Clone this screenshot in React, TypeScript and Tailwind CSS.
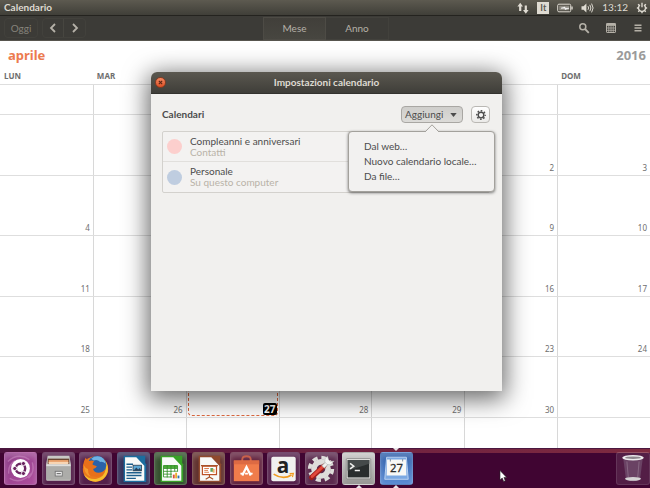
import React, { useState } from "react";

const DAYS = ["LUN", "MAR", "MER", "GIO", "VEN", "SAB", "DOM"];
const TODAY = 27;

// april 2016, 0 = cell outside the month
const WEEKS = [
  [0, 0, 0, 0, 0, 0, 0],
  [0, 0, 0, 0, 1, 2, 3],
  [4, 5, 6, 7, 8, 9, 10],
  [11, 12, 13, 14, 15, 16, 17],
  [18, 19, 20, 21, 22, 23, 24],
  [25, 26, 27, 28, 29, 30, 0],
  [0, 0, 0, 0, 0, 0, 0],
];

const CALENDARS = [
  { name: "Compleanni e anniversari", source: "Contatti", dot: "bg-[#fccfcd]" },
  { name: "Personale", source: "Su questo computer", dot: "bg-[#bfcde0]" },
];

const ADD_OPTIONS = ["Dal web…", "Nuovo calendario locale…", "Da file…"];

function Gear({ className }: { className?: string }) {
  return (
    <svg viewBox="0 0 16 16" className={className} fill="none" stroke="currentColor">
      <circle cx="8" cy="8" r="4.5" strokeWidth="2.2" />
      <circle
        cx="8"
        cy="8"
        r="6.7"
        strokeWidth="2.4"
        strokeDasharray="2.6 2.66"
        strokeDashoffset="1.3"
      />
    </svg>
  );
}

function TopPanel() {
  return (
    <header className="flex h-4 items-center justify-between border-b border-[#24231f] bg-linear-to-b from-[#5d5a50] to-[#403f39] pr-0.5 pl-1 text-[#dfdbd2]">
      <span className="text-[10px] font-bold">Calendario</span>
      <div className="flex items-center gap-2">
        <svg viewBox="0 0 12 12" className="h-3 w-3" fill="currentColor">
          <path d="M3.2 .8 6 4.4H4.3V9H2.100V4.400H.4zM8.800 11.700 6 8h1.700V3.400h2.200V8h1.700z" />
        </svg>
        <span className="h-3 w-3 bg-[#dfdbd2] text-center text-[9px] leading-3 font-bold text-[#5c5a53]">It</span>
        <svg viewBox="0 0 16 10" className="h-[10px] w-4" fill="none" stroke="currentColor">
          <rect x=".7" y="1.2" width="13" height="7.6" rx="1.2" />
          <path d="M15 3.5v3" strokeWidth="1.4" />
          <rect x="2.2" y="2.7" width="10" height="4.6" fill="#8e8b82" stroke="none" />
          <path d="M4 5.2 8 4v1.2h4L8 6.6V5.2z" fill="#fff" stroke="#fff" strokeWidth=".5" />
        </svg>
        <svg viewBox="0 0 13 12" className="h-3 w-[13px]" fill="none" stroke="currentColor">
          <path d="M.5 4.2h2L5.4 1.6v8.8L2.5 7.8h-2z" fill="currentColor" stroke="none" />
          <path d="M7 4.2q1.2 1.8 0 3.6M8.8 2.8q2.2 3.2 0 6.4M10.6 1.6q3 4.4 0 8.8" />
        </svg>
        <time className="text-[10px]">13:12</time>
        <svg viewBox="0 0 14 14" className="h-3 w-3" fill="none" stroke="currentColor">
          <path d="M4.6 3.6a4.1 4.1 0 1 0 4.8 0M7 .8v5.4" strokeWidth="1.6" />
          <path
            d="M1 7h1.6M11.4 7H13M2.6 11.4l1.2-1.2M11.4 11.4l-1.2-1.2M7 11.4V13M2.4 2.6l1.4 1.3M11.6 2.6l-1.4 1.3"
            strokeWidth="1.6"
          />
        </svg>
      </div>
    </header>
  );
}

function Toolbar() {
  return (
    <nav className="grid h-[25px] grid-cols-[1fr_auto_1fr] items-center border-b border-[#57554e] bg-[#3c3b37] pr-0.5 pl-1 text-[10px] text-[#b5b1a8]">
      <div className="flex items-center gap-1">
        <button className="h-5 w-[34px] rounded-sm border border-[#42413c] text-[#86837b]">Oggi</button>
        <div className="flex h-5 rounded-sm border border-[#42413c]">
          <button aria-label="Precedente" className="flex w-[21px] items-center justify-center border-r border-[#474640]">
            <svg viewBox="0 0 8 10" className="h-[10px] w-2" fill="none" stroke="currentColor" strokeWidth="1.8">
              <path d="M6 1 2 5l4 4" />
            </svg>
          </button>
          <button aria-label="Successivo" className="flex w-[21px] items-center justify-center">
            <svg viewBox="0 0 8 10" className="h-[10px] w-2" fill="none" stroke="currentColor" strokeWidth="1.8">
              <path d="m2 1 4 4-4 4" />
            </svg>
          </button>
        </div>
      </div>
      <div className="flex h-[23px]">
        <button className="w-[63px] border border-[#4d4b45] bg-linear-to-b from-[#413f3a] to-[#474640]">Mese</button>
        <button className="w-[63px] border border-l-0 border-[#42413c]">Anno</button>
      </div>
      <div className="flex items-center justify-end gap-[15px] pr-1">
        <button aria-label="Cerca">
          <svg viewBox="0 0 12 12" className="h-3 w-3" fill="none" stroke="currentColor">
            <circle cx="4.8" cy="4.8" r="3" strokeWidth="1.5" />
            <path d="m7 7 3.8 3.8" strokeWidth="1.8" />
          </svg>
        </button>
        <button aria-label="Calendari">
          <svg viewBox="0 0 12 12" className="h-3 w-3" fill="none" stroke="currentColor">
            <rect x="1.5" y="1.5" width="9" height="9" rx=".6" />
            <path d="M1.5 2.6h9" strokeWidth="2.6" />
            <path d="M1.5 6h9M1.5 8.3h9M3.8 4v6.5M6 4v6.5M8.2 4v6.5" strokeWidth=".8" />
          </svg>
        </button>
        <button aria-label="Menu">
          <svg viewBox="0 0 12 12" className="h-3 w-3" stroke="currentColor" strokeWidth="1.5">
            <path d="M2.5 3.2h7M2.5 6h7M2.5 8.8h7" />
          </svg>
        </button>
      </div>
    </nav>
  );
}

function Month() {
  return (
    <main className="flex flex-1 flex-col bg-white font-['Noto_Sans',sans-serif]">
      <div className="flex h-[30px] items-center justify-between pr-1 pl-2 text-[13px] font-bold">
        <h1 className="text-[#ec7b50]">aprile</h1>
        <span className="text-[#9b9b9b]">2016</span>
      </div>
      <table className="flex flex-1 flex-col">
        <thead className="block">
          <tr className="grid h-[13px] grid-cols-7">
            {DAYS.map((d) => (
              <th key={d} className="pl-1 text-left text-[8px] leading-[10px] font-bold text-[#6e6e6e]">
                {d}
              </th>
            ))}
          </tr>
        </thead>
        <tbody className="grid flex-1 grid-rows-[30px_repeat(5,1fr)_31px]">
          {WEEKS.map((week, w) => (
            <tr key={w} className="grid grid-cols-7 border-t border-[#dedede]">
              {week.map((day, i) => (
                <td
                  key={i}
                  className="flex border-l border-[#d8d8d8] p-px text-[8px] leading-3 text-[#6e6e6e] first:border-l-0"
                >
                  {day === TODAY ? (
                    <div className="flex flex-1 items-end justify-end rounded-sm border border-dashed border-[#e0693f]">
                      <span className="rounded-xs bg-black px-px text-[10px] font-bold text-white">{day}</span>
                    </div>
                  ) : (
                    <span className="flex flex-1 items-end justify-end pr-0.5">{day || ""}</span>
                  )}
                </td>
              ))}
            </tr>
          ))}
        </tbody>
      </table>
    </main>
  );
}

function SettingsDialog() {
  const [menuOpen, setMenuOpen] = useState(true);

  return (
    <section
      role="dialog"
      aria-labelledby="dialog-title"
      className="absolute top-[72px] left-[151px] min-h-[319px] w-[351px] rounded-t-md bg-[#f1f0ee] text-[10px] text-[#4c4c4c] shadow-[0_5px_24px_3px_rgba(0,0,0,0.6)]"
    >
      <div className="grid h-[22px] grid-cols-[1fr_auto_1fr] items-center rounded-t-md border-b border-[#33322e] bg-linear-to-b from-[#5b5850] to-[#3f3e39] px-1">
        <button
          aria-label="Chiudi"
          className="flex h-[11px] w-[11px] items-center justify-center rounded-full border border-[#8a3a20] bg-linear-to-b from-[#f58a62] to-[#dd4e22] text-[#5a2414]"
        >
          <svg viewBox="0 0 6 6" className="h-[5px] w-[5px]" stroke="currentColor" strokeWidth="1.3">
            <path d="m1 1 4 4M5 1 1 5" />
          </svg>
        </button>
        <h2 id="dialog-title" className="font-bold text-[#dfdbd2]">
          Impostazioni calendario
        </h2>
      </div>

      <div className="pt-3 pr-3 pl-[11px]">
        <div className="flex items-center gap-2">
          <h3 className="flex-1 font-bold">Calendari</h3>
          <div className="relative">
            <button
              aria-haspopup="menu"
              aria-expanded={menuOpen}
              onClick={() => setMenuOpen(!menuOpen)}
              className="flex h-[17px] w-[62px] items-center justify-between rounded-sm border border-[#a9a7a3] bg-linear-to-b from-[#cfcecb] to-[#dcdbd8] pr-[5px] pl-[3px]"
            >
              Aggiungi
              <svg viewBox="0 0 8 5" className="h-1 w-[7px]" fill="currentColor">
                <path d="M0 0h8L4 5z" />
              </svg>
            </button>
            {menuOpen && (
              <div
                role="menu"
                className="absolute top-[25px] -right-8 z-10 flex w-[147px] flex-col rounded-sm border border-[#a3a19c] bg-[#f2f1f0] py-[7px] pl-[15px] shadow-[0_1px_3px_rgba(0,0,0,0.5)]"
              >
                <svg viewBox="0 0 14 8" className="absolute -top-2 left-[76px] h-2 w-[14px]" fill="#f2f1f0">
                  <path d="M0 8 7 .8 14 8" stroke="#a3a19c" />
                </svg>
                {ADD_OPTIONS.map((o) => (
                  <button key={o} role="menuitem" className="text-left leading-[15px] whitespace-nowrap">
                    {o}
                  </button>
                ))}
              </div>
            )}
          </div>
          <button
            aria-label="Preferenze"
            className="flex h-[17px] w-[19px] items-center justify-center rounded-sm border border-[#bab8b4] bg-linear-to-b from-white to-[#ebeae8]"
          >
            <Gear className="h-[10px] w-[10px]" />
          </button>
        </div>

        <ul className="mt-2 rounded-xs border border-[#d3d1cd] bg-[#f3f2f1]">
          {CALENDARS.map((c) => (
            <li key={c.name} className="flex h-[30px] items-center gap-2 border-b border-[#e1dfdc] px-1 last:border-b-0">
              <span className={`h-[15px] w-[15px] rounded-full ${c.dot}`} />
              <div className="leading-[11px]">
                <p>{c.name}</p>
                <p className="text-[#b9b3a8]">{c.source}</p>
              </div>
            </li>
          ))}
        </ul>
      </div>
    </section>
  );
}

function DocPage({ color, children }: { color: string; children: React.ReactNode }) {
  return (
    <>
      <path d="M6 3h16l8 9v19H6z" fill={color} />
      <path d="M7.5 4.5h12l8.5 9V29.500H7.500z" fill="#f8faf8" />
      <path d="M20 3h9v11z" fill={color} />
      {children}
    </>
  );
}

const LAUNCHERS: { label: string; tile: string; running?: boolean; focused?: boolean; art: React.ReactNode }[] = [
  {
    label: "Dash",
    tile: "bg-linear-to-br from-[#8c3a86] to-[#b0509f]",
    art: (
      <>
        <path d="M3 9Q14 -1 26 7M5 27Q17 34 29 21M4 22Q3 12 11 8M29 10Q32 20 25 27" fill="none" stroke="#cf8fc6" strokeWidth="1.500" opacity=".5" />
        <circle cx="16.500" cy="16.500" r="10" fill="#fff" />
        <circle cx="16.500" cy="16.500" r="5" fill="none" stroke="#6a2560" strokeWidth="2.600" />
        <g fill="#6a2560" stroke="#fff" strokeWidth=".9">
          <circle cx="10.400" cy="16.500" r="2.200" />
          <circle cx="19.600" cy="11.200" r="2.200" />
          <circle cx="19.600" cy="21.800" r="2.200" />
        </g>
      </>
    ),
  },
  {
    label: "File",
    tile: "bg-[#54204b]",
    art: (
      <>
        <path d="M5 3h23l1.500 8v17.500q0 1-1 1h-24q-1 0-1-1V11z" fill="#c9c9c6" />
        <path d="M5 6h23v6H5z" fill="#6a4632" />
        <path d="M6 7.500h21v3H6z" fill="#e9a26d" />
        <path d="M6 9.500h21v2.500H6z" fill="#f7d5b4" />
        <path d="M3.500 13h26v15.500h-26z" fill="#acaca9" />
        <path d="M3.500 12h26v2h-26z" fill="#dededc" />
        <rect x="13" y="19.500" width="7.500" height="5" fill="#ececec" stroke="#777" />
        <path d="M14.500 22h4.500" stroke="#555" />
      </>
    ),
  },
  {
    label: "Firefox",
    tile: "bg-[#54204b]",
    art: (
      <>
        <circle cx="16.500" cy="17" r="13.500" fill="#ea7a1d" />
        <path d="M26 7q5 6 3.500 13-3 10-13 10.500Q7 30 3.800 22q6 7 14 5.500 8-2 9.500-10z" fill="#f6bf2f" />
        <circle cx="18" cy="13" r="10" fill="#2b62a8" />
        <path d="M12 6q5-4 11-1.500 4 3 4.500 7-3-2.500-6-2-3-3-7-1.500z" fill="#6fb3e3" />
        <path d="M3 14Q4 8 6 5q1.500 3 4 3.500 3-1 5 .5-2 1.500-1.500 3.500l4.500 1.500q-1 2-4 3 1 4 5.500 4 5 0 7.500-4-1 8-9 8.500Q6 25 3 14z" fill="#e8701a" />
        <path d="M4 13q0 9 7 12-3-4-2.500-8Q5.500 16 4 13z" fill="#f59a2b" />
      </>
    ),
  },
  {
    label: "Writer",
    tile: "bg-[#37335c]",
    art: (
      <DocPage color="#1b6d9e">
        <path d="M9 12h7M9 15h6M9 18h6M9 21h16M9 24h16M9 27h10" stroke="#1d5f8c" strokeWidth="1.500" />
        <rect x="16" y="13" width="9" height="6" fill="#5ba8d5" stroke="#234" strokeWidth=".8" />
        <path d="m16.500 19 3-3.500 2 2 1.500-1.500 2 3z" fill="#28415a" />
      </DocPage>
    ),
  },
  {
    label: "Calc",
    tile: "bg-[#35502f]",
    art: (
      <DocPage color="#38a227">
        <path d="M9 13h15v13H9z" fill="#fff" />
        <path d="M9 13h15v3H9z" fill="#4eae3a" />
        <path d="M9 13.500h15v12H9zM9 16.500h15M9 19.500h15M9 22.500h15M13 13v13M17 13v13M21 13v13" fill="none" stroke="#2f8d25" strokeWidth=".9" />
        <path d="M18 20h9v8h-9z" fill="#fff" />
        <path d="M19 27v-4h2v4z" fill="#d9503f" />
        <path d="M21.500 27v-6h2v6z" fill="#ecae2d" />
        <path d="M24 27v-3h2v3z" fill="#2f72b0" />
      </DocPage>
    ),
  },
  {
    label: "Impress",
    tile: "bg-[#61322f]",
    art: (
      <DocPage color="#8f4a2d">
        <rect x="10" y="14" width="15" height="9" fill="#fff" stroke="#bd5227" strokeWidth="1.300" />
        <path d="M8.500 13.500h18M17.500 23v2.500m0 0-4 2.500m4-2.500 4 2.500" stroke="#a9532b" strokeWidth="1.200" fill="none" />
        <path d="M12 16.500h5M12 18.500h4M12 20.500h5" stroke="#d97744" />
        <path d="M18.500 16h3v4h-3z" fill="#63a35b" />
        <path d="M21 17h2v4h-2z" fill="#edb46b" />
      </DocPage>
    ),
  },
  {
    label: "Ubuntu Software",
    tile: "bg-[#632540]",
    art: (
      <>
        <path d="M12 9V7q0-3.500 4.500-3.500T21 7v2" fill="none" stroke="#c9604a" strokeWidth="2" />
        <path d="M3 8h27v22H3z" fill="#f07c4b" />
        <path d="M3 8h27v4H3z" fill="#dd6a43" />
        <path d="m12 24 4.500-9 4.500 9" fill="none" stroke="#fff" strokeWidth="2.400" />
        <path d="M10 22h3.500M15 22h3M19.500 22H23" stroke="#fff" strokeWidth="2" />
      </>
    ),
  },
  {
    label: "Amazon",
    tile: "bg-[#54204b]",
    art: (
      <>
        <rect x="3.500" y="4" width="26" height="26" rx="2" fill="#f1f1ef" />
        <text x="16" y="21" textAnchor="middle" fontSize="22" fontWeight="bold" fontFamily="Open Sans" fill="#222">
          a
        </text>
        <path d="M6 22.500q10 6.500 19 1" fill="none" stroke="#f09b20" strokeWidth="1.800" />
        <path d="m23 22 4-.2-1 3.800" fill="none" stroke="#f09b20" strokeWidth="1.300" />
      </>
    ),
  },
  {
    label: "Impostazioni",
    tile: "bg-[#5b2a4e]",
    art: (
      <>
        <circle cx="16" cy="17" r="7.500" fill="none" stroke="#deddda" strokeWidth="6" />
        <circle cx="16" cy="17" r="12" fill="none" stroke="#deddda" strokeWidth="4" strokeDasharray="5.400 4.025" />
        <path d="m6 26 13-12" stroke="#a21d18" strokeWidth="5.500" strokeLinecap="round" />
        <path d="m6.500 25 12-11" stroke="#e2483c" strokeWidth="3" strokeLinecap="round" />
        <path d="m18 15 6-6" stroke="#b9b9b6" strokeWidth="4.500" />
        <path d="m18.500 14.500 5.500-5.500" stroke="#f0f0ee" strokeWidth="2.800" />
        <path d="M23 3.500q-4 2-3 6 2 4 6 3l4-4-4 .5-2-2z" fill="#f3f3f1" stroke="#a8a8a5" strokeWidth=".5" />
      </>
    ),
  },
  {
    label: "Terminale",
    tile: "bg-linear-to-b from-[#c7c6c5] to-[#989795]",
    running: true,
    art: (
      <>
        <rect x="3.500" y="6" width="26" height="21.500" rx="1" fill="#e4e4e1" stroke="#777" strokeWidth=".7" />
        <rect x="5" y="7.500" width="23" height="18.500" fill="#292d2d" />
        <path d="M5 7.500h23v4L5 19z" fill="#454a4a" />
        <path d="m7.500 11 4 3-4 3M12.500 18.500H18" fill="none" stroke="#f0f0ee" strokeWidth="1.600" />
      </>
    ),
  },
  {
    label: "Calendario",
    tile: "bg-linear-to-b from-[#2f5ea8] to-[#5b8cd4]",
    running: true,
    focused: true,
    art: (
      <>
        <path d="M6 4.500h21l2 23.500H4z" fill="#7ba8e2" stroke="#d4e4f8" strokeWidth=".8" />
        <path d="M6.500 7h20l.5 17h-21z" fill="#f8f8f6" />
        <path d="M10 6.500v2.500M23 6.500v2.500" stroke="#8a99ac" strokeWidth="1.200" />
        <text x="16.500" y="20.500" textAnchor="middle" fontSize="12" fontFamily="Noto Sans" fill="#2b2b2b" stroke="#2b2b2b" strokeWidth=".3">
          27
        </text>
      </>
    ),
  },
];

function Launcher() {
  return (
    <footer className="relative flex h-10 items-start justify-between border-t border-[#4a1840] bg-[#400532] pl-1">
      <div className="absolute inset-x-0 top-0 h-1 bg-linear-to-r from-[#4b123c] via-[#6e2140] to-[#7e2a40]" />
      <ul className="relative flex w-[409px] justify-between pt-[3px]">
        {LAUNCHERS.map((l) => (
          <li key={l.label} className="relative">
            <button
              aria-label={l.label}
              className={`block h-[33px] w-[33px] rounded-[3px] border border-white/20 shadow-[inset_0_4px_5px_rgba(255,255,255,0.22)] ${l.tile}`}
            >
              <svg viewBox="0 0 33 33" className="h-full w-full">
                {l.art}
              </svg>
            </button>
            {l.focused && (
              <svg viewBox="0 0 6 3" className="absolute -top-1 left-1/2 h-[3px] w-[6px] -translate-x-1/2" fill="#e8e4e8">
                <path d="M0 0h6L3 3z" />
              </svg>
            )}
            {l.running && (
              <svg viewBox="0 0 6 3" className="absolute -bottom-[3px] left-1/2 h-[3px] w-[6px] -translate-x-1/2" fill="#e8e4e8">
                <path d="M0 3h6L3 0z" />
              </svg>
            )}
          </li>
        ))}
      </ul>
      <button
        aria-label="Cestino"
        className="relative mt-[3px] h-[33px] w-[34px] rounded-[3px] border border-white/10 bg-white/10"
      >
        <svg viewBox="0 0 33 33" className="h-full w-full">
          <path d="M6 5h21l-3 23q-7 4-15 0z" fill="#7a5a78" opacity=".6" />
          <path d="M10 9l1.500 17M23 9l-1.500 17" stroke="#b5a2b3" strokeWidth="1" opacity=".4" />
          <ellipse cx="16.500" cy="27.500" rx="8.500" ry="2" fill="#d5d2d4" />
          <ellipse cx="16.500" cy="5" rx="11.500" ry="3" fill="#eceaec" />
          <ellipse cx="16.500" cy="5" rx="8.500" ry="1.300" fill="#8d858c" />
        </svg>
      </button>
    </footer>
  );
}

export default function App() {
  return (
    <div className="relative flex min-h-screen flex-col overflow-hidden font-[Lato,sans-serif]">
      <TopPanel />
      <Toolbar />
      <Month />
      <Launcher />
      <SettingsDialog />
      {/* mouse pointer */}
      <svg viewBox="0 0 8 12" className="pointer-events-none absolute top-[470px] left-[499px] h-3 w-2">
        <path d="M1 .5v9.500l2.200-2 1.500 3.500 1.600-.7L4.900 7.400h2.800z" fill="#fff" stroke="#222" strokeWidth=".6" />
      </svg>
    </div>
  );
}
